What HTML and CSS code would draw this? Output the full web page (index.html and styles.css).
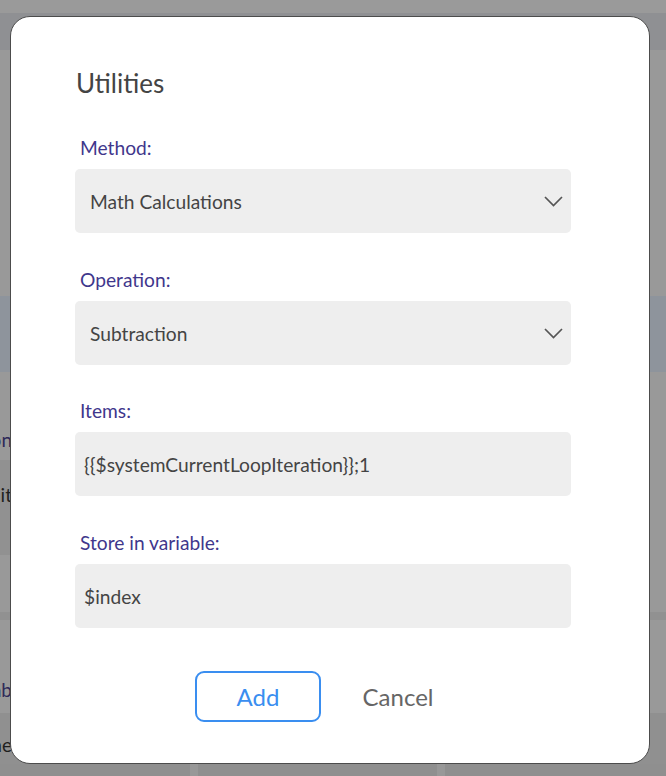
FILE: index.html
```html
<!DOCTYPE html>
<html lang="en">
<head>
<meta charset="utf-8">
<title>Utilities</title>
<link rel="stylesheet" href="styles.css">
</head>
<body>
<div class="backdrop">
  <div class="band band-top"></div>
  <div class="band band-head"></div>
  <div class="band band-plain h246"></div>
  <div class="band band-blue"></div>
  <div class="band band-plain h88">
    <div class="frag frag-label frag-on"><span>Operation</span></div>
  </div>
  <div class="band band-plain h95">
    <div class="left-box"><div class="frag frag-text frag-it"><span>Edit</span></div></div>
  </div>
  <div class="band band-plain h57"></div>
  <div class="band band-line"></div>
  <div class="band band-plain h93">
    <div class="frag frag-label frag-b"><span>Lab</span></div>
  </div>
  <div class="band band-foot">
    <div class="frag frag-text frag-na"><span>Name</span></div>
    <div class="cols">
      <div class="col c1"></div>
      <div class="strip"></div>
      <div class="col c2"></div>
      <div class="strip"></div>
      <div class="col c3"></div>
    </div>
  </div>
</div>

<div class="modal">
  <h1 class="title">Utilities</h1>
  <div class="form">
    <div class="field">
      <div class="label">Method:</div>
      <div class="box select">
        <span>Math Calculations</span>
        <svg class="chev" width="19" height="11" viewBox="0 0 19 11"><polyline points="1,1 9.5,9.5 18,1" fill="none" stroke="#555" stroke-width="1.7"/></svg>
      </div>
    </div>
    <div class="field">
      <div class="label">Operation:</div>
      <div class="box select">
        <span>Subtraction</span>
        <svg class="chev" width="19" height="11" viewBox="0 0 19 11"><polyline points="1,1 9.5,9.5 18,1" fill="none" stroke="#555" stroke-width="1.7"/></svg>
      </div>
    </div>
    <div class="field f3">
      <div class="label">Items:</div>
      <div class="box input"><span>{{$systemCurrentLoopIteration}};1</span></div>
    </div>
    <div class="field">
      <div class="label">Store in variable:</div>
      <div class="box input"><span>$index</span></div>
    </div>
  </div>
  <div class="actions">
    <button class="btn btn-add">Add</button>
    <button class="btn btn-cancel">Cancel</button>
  </div>
</div>
</body>
</html>
```

FILE: styles.css
```css
html, body {
  margin: 0;
  padding: 0;
}
body {
  width: 666px;
  height: 776px;
  overflow: hidden;
  background: #999999;
  font-family: "Lato", "Liberation Sans", sans-serif;
  position: relative;
}
.backdrop {
  display: flex;
  flex-direction: column;
}
.band {
  width: 666px;
  position: relative;
}
.band-top { height: 13px; background: #9a9a9a; }
.band-head { height: 37px; background: #8f9093; }
.band-plain { background: #999999; }
.h246 { height: 246px; }
.h88 { height: 88px; display: flex; align-items: flex-end; }
.h95 { height: 95px; }
.h57 { height: 57px; }
.h93 { height: 93px; display: flex; align-items: flex-start; }
.band-blue { height: 76px; background: #8e949c; }
.band-line { height: 8px; background: #919191; }
.band-foot { height: 63px; background: #909090; display: flex; flex-direction: column; }
.left-box {
  width: 200px;
  height: 95px;
  background: #919191;
  display: flex;
  align-items: flex-start;
}
.frag {
  width: 12px;
  overflow: hidden;
  display: flex;
  justify-content: flex-end;
  white-space: nowrap;
  font-size: 19px;
  line-height: 22px;
}
.frag span { flex: none; }
.frag-label { color: #2e2958; }
.frag-text { color: #1e1e1e; }
.frag-on { margin-bottom: 9px; }
.frag-it { margin-top: 24px; }
.frag-b { margin-top: 59px; }
.frag-na { margin-top: 21px; }
.cols {
  margin-top: auto;
  display: flex;
  height: 12px;
}
.col { background: #8f8f8f; }
.c1 { width: 190px; }
.c2 { width: 239px; }
.c3 { flex: 1; }
.strip { width: 8px; background: #989898; }

.modal {
  position: absolute;
  left: 10px;
  top: 16px;
  width: 640px;
  height: 748px;
  box-sizing: border-box;
  background: #ffffff;
  border: 1px solid #4c4c4c;
  border-radius: 20px;
  padding: 50px 78px 0 64px;
  display: flex;
  flex-direction: column;
}
.title {
  margin: 0 0 0 1px;
  font-size: 26px;
  font-weight: 400;
  line-height: 32px;
  color: #444444;
}
.form {
  margin-top: 38px;
  display: flex;
  flex-direction: column;
  gap: 36px;
}
.field {
  display: flex;
  flex-direction: column;
  gap: 10px;
}
.f3 { margin-top: -1px; }
.label {
  padding-left: 5px;
  font-size: 19.2px;
  line-height: 22px;
  color: #3f378c;
}
.box {
  height: 64px;
  box-sizing: border-box;
  background: #eeeeee;
  border-radius: 5px;
  display: flex;
  align-items: center;
  justify-content: space-between;
  font-size: 19.2px;
  color: #444444;
}
.select { padding: 0 8px 0 15px; }
.input { padding: 0 10px 0 9px; }
.chev { margin-top: 1px; }
.actions {
  margin-top: 43px;
  display: flex;
  justify-content: center;
  gap: 14px;
  padding-left: 10px;
}
.btn {
  width: 126px;
  height: 51px;
  box-sizing: border-box;
  font-family: "Lato", "Liberation Sans", sans-serif;
  font-size: 24px;
  border-radius: 9px;
  background: #ffffff;
  cursor: pointer;
  padding: 0;
}
.btn-add {
  border: 2px solid #3a8ef0;
  color: #3a8ef0;
}
.btn-cancel {
  border: 2px solid transparent;
  color: #666666;
}
```
